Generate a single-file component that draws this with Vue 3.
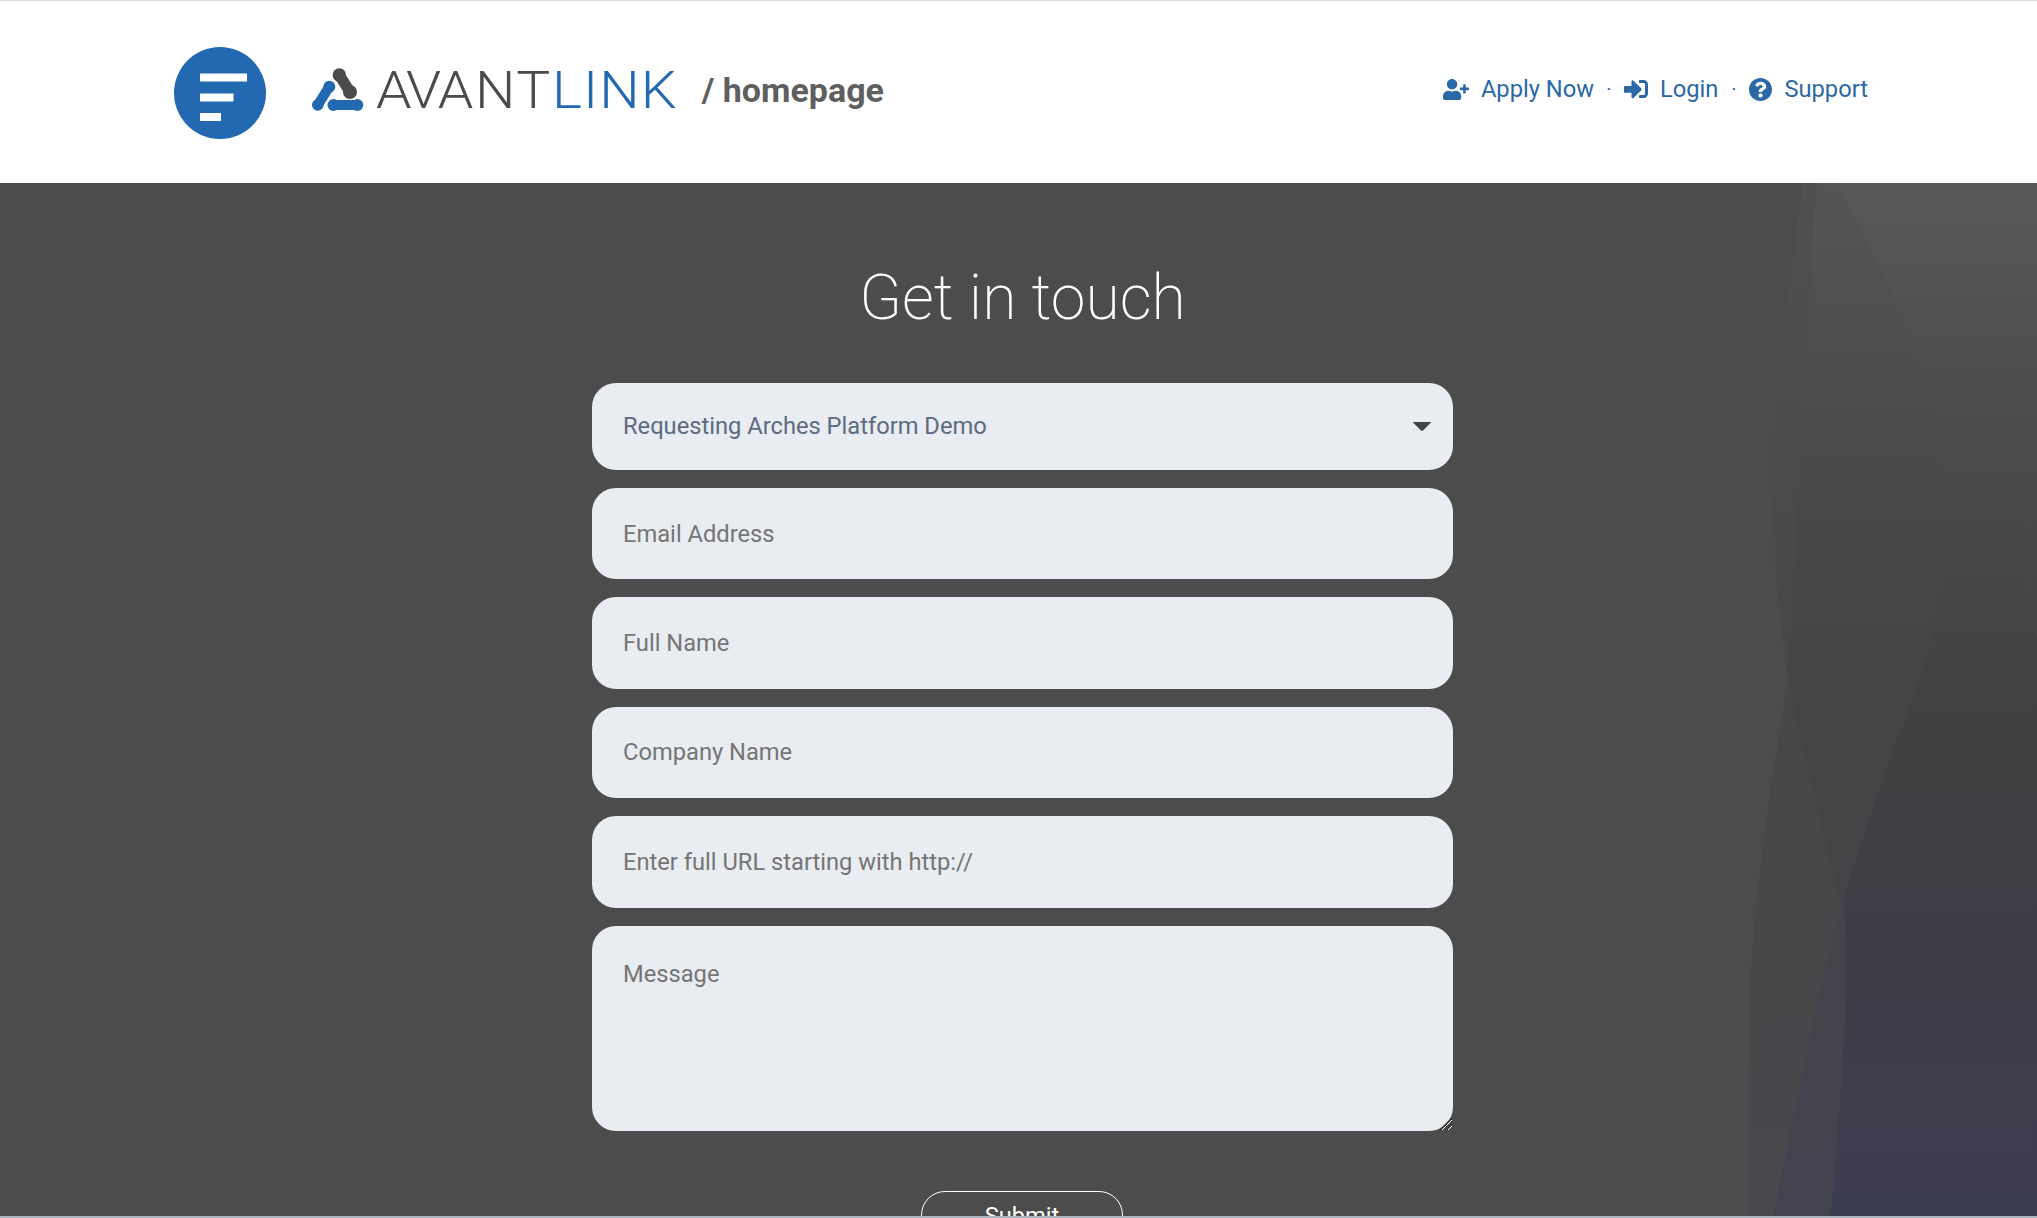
<script setup>
const fields = [
  { placeholder: 'Email Address', type: 'email' },
  { placeholder: 'Full Name', type: 'text' },
  { placeholder: 'Company Name', type: 'text' },
  { placeholder: 'Enter full URL starting with http://', type: 'text' },
]
</script>

<template>
  <div class="page">
    <header class="top">
      <div class="brand">
        <svg class="badge" viewBox="0 0 92 92" aria-hidden="true">
          <circle cx="46" cy="46" r="46" fill="#2269b1" />
          <rect x="26" y="26.500" width="47" height="8" fill="#fff" />
          <rect x="26" y="46.500" width="33.500" height="8" fill="#fff" />
          <rect x="26" y="66" width="21" height="8" fill="#fff" />
        </svg>
        <svg class="mark" viewBox="0 0 52 46" aria-hidden="true">
          <g fill="#4b4b4d">
            <circle cx="27.300" cy="7" r="6.700" />
            <circle cx="38" cy="24" r="7" />
            <path d="M27.300 7 L38 24" stroke="#4b4b4d" stroke-width="11" />
          </g>
          <g fill="#2269b1">
            <circle cx="17.300" cy="18.700" r="6" />
            <circle cx="5.800" cy="37" r="5.800" />
            <path d="M17.300 18.700 L5.800 37" stroke="#2269b1" stroke-width="10" />
            <circle cx="21.500" cy="37" r="6" />
            <circle cx="45.300" cy="37" r="6" />
            <path d="M21.500 37 L45.300 37" stroke="#2269b1" stroke-width="10" />
          </g>
        </svg>
        <div class="wordmark"><span class="avant"><span class="tight">AV</span>ANT</span><span class="link">LINK</span></div>
        <div class="crumb">/ homepage</div>
      </div>
      <nav class="nav">
        <a class="nav-item">
          <svg class="ico plus" viewBox="0 0 640 512"><path fill="currentColor" d="M624 208h-64v-64c0-8.800-7.200-16-16-16h-32c-8.800 0-16 7.200-16 16v64h-64c-8.800 0-16 7.200-16 16v32c0 8.800 7.200 16 16 16h64v64c0 8.800 7.200 16 16 16h32c8.800 0 16-7.200 16-16v-64h64c8.800 0 16-7.200 16-16v-32c0-8.800-7.200-16-16-16zm-400 48c70.700 0 128-57.300 128-128S294.700 0 224 0 96 57.300 96 128s57.300 128 128 128zm89.600 32h-16.700c-22.200 10.200-46.900 16-72.900 16s-50.600-5.800-72.900-16h-16.700C60.200 288 0 348.200 0 422.400V464c0 26.500 21.500 48 48 48h352c26.500 0 48-21.500 48-48v-41.600c0-74.200-60.200-134.400-134.400-134.400z"/></svg>
          Apply Now
        </a>
        <span class="dot first">·</span>
        <a class="nav-item">
          <svg class="ico sign" viewBox="0 0 512 512"><path fill="currentColor" d="M416 448h-84c-6.600 0-12-5.400-12-12v-40c0-6.600 5.400-12 12-12h84c17.700 0 32-14.300 32-32V160c0-17.700-14.300-32-32-32h-84c-6.600 0-12-5.400-12-12V76c0-6.600 5.400-12 12-12h84c53 0 96 43 96 96v192c0 53-43 96-96 96zm-47-201L201 79c-15-15-41-4.500-41 17v96H24c-13.300 0-24 10.700-24 24v96c0 13.300 10.700 24 24 24h136v96c0 21.500 26 32 41 17l168-168c9.300-9.400 9.300-24.600 0-34z"/></svg>
          Login
        </a>
        <span class="dot">·</span>
        <a class="nav-item">
          <svg class="ico help" viewBox="8 8 496 496"><path fill="currentColor" d="M504 256c0 136.997-111.043 248-248 248S8 392.997 8 256C8 119.083 119.043 8 256 8s248 111.083 248 248zM262.655 90c-54.497 0-89.255 22.957-116.549 63.758-3.536 5.286-2.353 12.415 2.715 16.258l34.699 26.310c5.205 3.947 12.621 3.008 16.665-2.122 17.864-22.658 30.113-35.797 57.303-35.797 20.429 0 45.698 13.148 45.698 32.958 0 14.976-12.363 22.667-32.534 33.976C247.128 238.528 216 254.941 216 296v4c0 6.627 5.373 12 12 12h56c6.627 0 12-5.373 12-12v-1.333c0-28.462 83.186-29.647 83.186-106.667 0-58.002-60.165-102-116.531-102zM256 338c-25.365 0-46 20.635-46 46 0 25.364 20.635 46 46 46s46-20.636 46-46c0-25.365-20.635-46-46-46z"/></svg>
          Support
        </a>
      </nav>
    </header>

    <main class="hero">
      <svg class="backdrop" viewBox="1737 183 300 1033" preserveAspectRatio="none" aria-hidden="true">
        <defs>
          <linearGradient id="g1" gradientUnits="userSpaceOnUse" x1="0" y1="183" x2="0" y2="1216">
            <stop offset="0" stop-color="#505050" />
            <stop offset="0.31" stop-color="#4a4a4a" />
            <stop offset="0.5" stop-color="#474747" />
            <stop offset="0.8" stop-color="#47474a" />
            <stop offset="1" stop-color="#48484d" />
          </linearGradient>
          <linearGradient id="g2" gradientUnits="userSpaceOnUse" x1="0" y1="183" x2="0" y2="1216">
            <stop offset="0" stop-color="#555555" />
            <stop offset="0.31" stop-color="#484848" />
            <stop offset="0.5" stop-color="#444444" />
            <stop offset="0.7" stop-color="#444448" />
            <stop offset="1" stop-color="#45454f" />
          </linearGradient>
          <linearGradient id="g3" gradientUnits="userSpaceOnUse" x1="0" y1="183" x2="0" y2="1216">
            <stop offset="0" stop-color="#595959" />
            <stop offset="0.2" stop-color="#4d4d4d" />
            <stop offset="0.42" stop-color="#444444" />
            <stop offset="0.52" stop-color="#414141" />
            <stop offset="0.72" stop-color="#3e3e47" />
            <stop offset="1" stop-color="#3d3d50" />
          </linearGradient>
          <linearGradient id="g4" gradientUnits="userSpaceOnUse" x1="0" y1="899" x2="0" y2="1216">
            <stop offset="0" stop-color="#44444a" />
            <stop offset="1" stop-color="#434350" />
          </linearGradient>
        </defs>
        <path fill="url(#g1)" d="M1803 183 C1790 290 1772 400 1773 504 C1775 580 1782 640 1788 678 C1772 780 1752 900 1750 1005 C1748 1090 1748 1160 1748 1216 H2037 V183 Z" />
        <path fill="url(#g2)" d="M1817 183 C1805 350 1795 560 1788 678 C1805 760 1825 840 1840 899 C1848 950 1846 1010 1842 1070 C1838 1130 1834 1180 1830 1216 H2037 V183 Z" />
        <path fill="url(#g3)" d="M1837 183 C1880 260 1925 350 1940 457 C1948 510 1948 540 1945 551 C1940 600 1930 650 1917 685 C1890 760 1860 840 1843 899 C1820 980 1795 1120 1773 1216 H2037 V183 Z" />
        <path fill="url(#g4)" d="M1843 899 C1820 980 1795 1120 1773 1216 H1830 C1834 1180 1838 1130 1842 1070 C1846 1010 1848 950 1843 899 Z" />
        <path fill="none" stroke="#4a4a4a" stroke-width="1" d="M2023 484 C2026 540 2032 600 2037 638" />
      </svg>
      <div class="content">
        <h1 class="title">Get in touch</h1>
        <form class="form" @submit.prevent>
          <div class="select-wrap">
            <select class="field select">
              <option>Requesting Arches Platform Demo</option>
            </select>
            <svg class="caret" viewBox="0 0 20 9" aria-hidden="true"><path fill="#454545" d="M0.500 0 H19.500 L11 8.400 Q10 9 9 8.400 Z" /></svg>
          </div>
          <input v-for="f in fields" :key="f.placeholder" class="field input" :type="f.type" :placeholder="f.placeholder" />
          <div class="message-wrap">
            <textarea class="field message" placeholder="Message"></textarea>
            <svg class="grip" viewBox="0 0 14 14" aria-hidden="true">
              <path d="M1 13 L13 1 M7 13 L13 7" stroke="#333" stroke-width="1.300" fill="none" />
              <path d="M3 13 L13 3 M9 13 L13 9" stroke="#fff" stroke-width="1" fill="none" />
            </svg>
          </div>
          <button class="submit" type="submit">Submit</button>
        </form>
      </div>
    </main>
    <div class="strip"></div>
  </div>
</template>

<style>
html, body { margin: 0; overflow: hidden; }
</style>

<style scoped>
.page {
  height: 1218px;
  display: flex;
  flex-direction: column;
  font-family: Roboto, "Liberation Sans", sans-serif;
  border-top: 1px solid #dcdcdc;
  box-sizing: border-box;
  background: #fff;
}
.top {
  height: 182px;
  flex: none;
  display: flex;
  align-items: center;
  justify-content: space-between;
  padding: 0 169px 0 174px;
}
.brand { display: flex; align-items: center; }
.badge { width: 92px; height: 92px; flex: none; position: relative; top: 1px; }
.mark { width: 52px; height: 46px; flex: none; margin: 0 0 0 46px; position: relative; top: -1px; }
.wordmark {
  margin-left: 12px;
  font-weight: 340;
  font-size: 52px;
  line-height: 60px;
  white-space: nowrap;
  position: relative;
  top: -1.500px;
  transform: scaleX(1.095);
  transform-origin: left center;
}
.avant { color: #4b4b4d; letter-spacing: 1.500px; }
.tight { letter-spacing: -3px; }
.link { color: #2269b1; letter-spacing: 1px; }
.crumb {
  margin-left: 50px;
  font-weight: 700;
  font-size: 34px;
  color: #5f5f5f;
  white-space: nowrap;
  position: relative;
  top: -2px;
}
.nav {
  display: flex;
  align-items: center;
  color: #2a69a6;
  font-size: 23.700px;
  position: relative;
  top: -3px;
}
.nav-item { display: flex; align-items: center; gap: 12px; }
.ico { display: block; flex: none; }
.plus { width: 26px; height: 21px; }
.sign { width: 24px; height: 24px; }
.help { width: 23px; height: 23px; }
.dot { width: 31px; text-align: center; font-size: 20px; }
.dot.first { width: 30px; }
.hero {
  flex: 1;
  min-height: 0;
  position: relative;
  overflow: hidden;
  background: #4c4c4c;
}
.backdrop {
  position: absolute;
  top: 0;
  right: 0;
  width: 300px;
  height: 100%;
}
.content {
  position: relative;
  padding-left: 8px;
  display: flex;
  flex-direction: column;
  align-items: center;
}
.title {
  margin: 74px 0 0;
  font-weight: 200;
  font-size: 62.500px;
  line-height: 82px;
  color: #fff;
}
.form {
  width: 861px;
  margin-top: 44px;
  display: flex;
  flex-direction: column;
  gap: 18px;
  align-items: center;
}
.select-wrap { position: relative; width: 100%; height: 87px; flex: none; }
.message-wrap { position: relative; width: 100%; height: 205px; flex: none; }
.field {
  display: block;
  width: 100%;
  box-sizing: border-box;
  border: 0;
  outline: 0;
  margin: 0;
  background: #e9ecf1;
  border-radius: 24px;
  padding: 0 31px;
  font-family: Roboto, sans-serif;
  font-size: 23.700px;
  color: #5c6b7f;
}
.select { height: 87px; padding-bottom: 1px; appearance: none; -webkit-appearance: none; }
.input { height: 91.400px; flex: none; }
.message { height: 205px; padding-top: 33px; padding-bottom: 0; line-height: 30px; resize: none; }
.field::placeholder { color: #757575; opacity: 1; }
.caret {
  position: absolute;
  right: 21px;
  top: 39px;
  width: 20px;
  height: 9px;
  pointer-events: none;
}
.grip {
  position: absolute;
  right: 0;
  bottom: 0;
  width: 14px;
  height: 14px;
  pointer-events: none;
}
.submit {
  flex: none;
  width: 202px;
  height: 50px;
  margin: 42px 0 0 -1px;
  padding: 0;
  background: transparent;
  color: #fff;
  border: 1px solid #fff;
  border-radius: 24px;
  font-family: Roboto, sans-serif;
  font-size: 23.700px;
  font-weight: 400;
}
.strip { height: 2px; flex: none; background: #a9b4bc; }
</style>
